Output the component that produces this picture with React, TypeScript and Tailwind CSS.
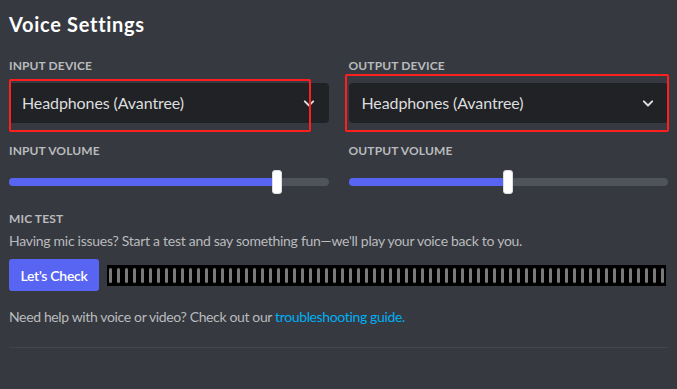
import React from 'react';

const BAR_COUNT = 70;

const Chevron = () => (
  <svg width="20" height="20" viewBox="0 0 24 24" className="text-[#dcddde]">
    <path d="M7 10l5 5 5-5" fill="none" stroke="currentColor" strokeWidth="2.4" strokeLinecap="round" strokeLinejoin="round" />
  </svg>
);

const Label: React.FC<{ children: React.ReactNode; className?: string }> = ({ children, className }) => (
  <div className={`text-[12px] leading-[16px] font-bold uppercase text-[#b9bbbe] tracking-[0.01em] ${className || ''}`}>
    {children}
  </div>
);

const Select: React.FC<{ value: string }> = ({ value }) => (
  <div className="h-[40px] bg-[#202225] rounded-[4px] flex items-center justify-between pl-[13px] pr-[10px] text-[16px] tracking-[-0.1px] text-[#dcddde]">
    <span>{value}</span>
    <Chevron />
  </div>
);

const Slider: React.FC<{ percent: number }> = ({ percent }) => (
  <div className="relative h-[24px] mt-[11px]">
    <div className="absolute left-0 right-0 top-[8px] h-[8px] rounded-full bg-[#4f545c]">
      <div className="h-full rounded-full bg-[#5865f2]" style={{ width: `${percent}%` }} />
    </div>
    {/* knob */}
    <div
      className="absolute top-0 w-[10px] h-[24px] rounded-[3px] bg-white border border-[#dcddde]"
      style={{ left: `calc(${percent}% - 5px)` }}
    />
  </div>
);

export default function App() {
  return (
    <div
      className="w-[677px] h-[389px] bg-[#36393f] px-[9px] pt-[12px] overflow-hidden"
      style={{ fontFamily: 'Lato, "Noto Sans", sans-serif' }}
    >
      <h1 className="text-[20px] leading-[24px] font-bold text-white tracking-[0.7px]">Voice Settings</h1>

      <div className="grid grid-cols-2 gap-x-[20px] mt-[22px]">
        <div>
          <Label className="mb-[9px]">Input Device</Label>
          <div className="relative">
            <Select value="Headphones (Avantree)" />
            <div className="absolute left-0 top-[-4px] w-[302px] h-[53px] border-2 border-[#ff1f1f] rounded-[2px] pointer-events-none" />
          </div>
          <Label className="mt-[20px]">Input Volume</Label>
          <Slider percent={84} />
        </div>
        <div>
          <Label className="mb-[9px]">Output Device</Label>
          <div className="relative">
            <Select value="Headphones (Avantree)" />
            <div className="absolute left-[-4px] right-[-1px] top-[-9px] h-[58px] border-2 border-[#ff1f1f] rounded-[2px] pointer-events-none" />
          </div>
          <Label className="mt-[20px]">Output Volume</Label>
          <Slider percent={50} />
        </div>
      </div>

      <Label className="mt-[17px]">Mic Test</Label>
      <p className="mt-[4px] text-[14px] leading-[20px] text-[#b9bbbe] tracking-[-0.28px]">
        Having mic issues? Start a test and say something fun—we'll play your voice back to you.
      </p>
      <div className="mt-[8px] flex items-center gap-[8px]">
        <button className="w-[90px] h-[32px] rounded-[3px] bg-[#5865f2] text-white text-[14px] font-semibold tracking-[-0.3px]">
          Let's Check
        </button>
        <div className="flex-1 h-[21px] bg-black flex items-center gap-[5px] px-[2px] overflow-hidden mr-[2px]">
          {Array.from({ length: BAR_COUNT }).map((_, i) => (
            <div key={i} className="w-[3px] h-[15px] shrink-0 rounded-full bg-[#7a7a7a]" />
          ))}
        </div>
      </div>
      <p className="mt-[16px] text-[14px] leading-[20px] text-[#b9bbbe] tracking-[-0.36px]">
        Need help with voice or video? Check out our{' '}
        <span className="text-[#00aff4]">troubleshooting guide.</span>
      </p>
      <div className="mt-[20px] h-px bg-[#42454a]" />
    </div>
  );
}
